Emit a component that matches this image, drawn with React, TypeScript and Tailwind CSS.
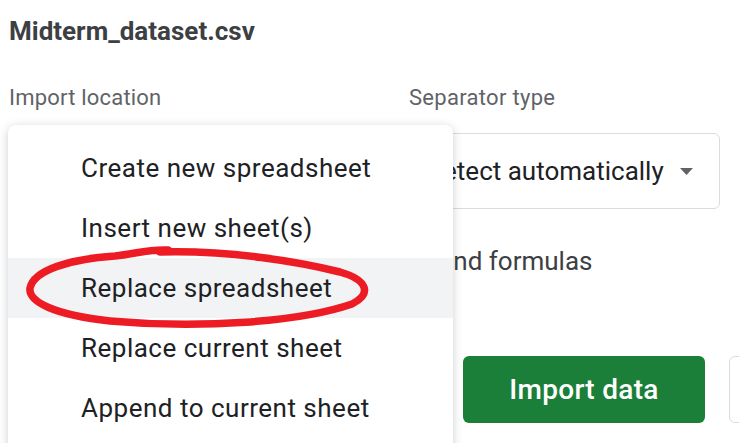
import { useState } from 'react';

type Location = 'create' | 'insert' | 'replace' | 'replaceCurrent' | 'append';

const locations: { id: Location; label: string }[] = [
  { id: 'create', label: 'Create new spreadsheet' },
  { id: 'insert', label: 'Insert new sheet(s)' },
  { id: 'replace', label: 'Replace spreadsheet' },
  { id: 'replaceCurrent', label: 'Replace current sheet' },
  { id: 'append', label: 'Append to current sheet' },
];

export default function App() {
  const [hovered, setHovered] = useState<Location>('replace'); // highlighted row in the screenshot

  return (
    <div className="relative w-[739px] h-[443px] overflow-hidden bg-white font-['Roboto',sans-serif]">
      {/* dialog body, partly under the open menu */}
      <div className="flex flex-col pl-[9px] pt-[15px]">
        <h1 className="text-[26px] leading-8 font-bold text-[#3c4043]">Midterm_dataset.csv</h1>

        <div className="mt-[37px] grid grid-cols-[400px_311px]">
          <div className="flex flex-col">
            <span className="text-[22px] leading-7 tracking-[0.2px] text-[#5f6368]">Import location</span>
          </div>
          <div className="flex flex-col">
            <span className="text-[22px] leading-7 tracking-[0.3px] text-[#5f6368]">Separator type</span>
            <div className="mt-[21px] h-[76px] flex items-center justify-between pl-4 pr-[26px] border border-[#dadce0] rounded-md">
              <span className="text-[26px] text-[#202124]">Detect automatically</span>
              <svg width="13" height="7" viewBox="0 0 13 7">
                <path d="M0 0 L13 0 L6.5 7 Z" fill="#5f6368" />
              </svg>
            </div>
          </div>
        </div>

        <label className="mt-[32px] h-10 flex items-center gap-6 text-[26px] text-[#3c4043]">
          <span className="w-10 h-10 flex items-center justify-center">
            <span className="w-[18px] h-[18px] border-2 border-[#5f6368] rounded-sm" />
          </span>
          Convert text to numbers, dates, and formulas
        </label>

        <div className="mt-[75px] flex gap-6 pl-[454px]">
          <button className="shrink-0 w-[242px] h-[67px] rounded-md bg-[#1b7f3a] text-white text-[28px] font-medium tracking-[0.3px]">
            Import data
          </button>
          <button className="shrink-0 h-[67px] px-10 rounded-md border border-[#dadce0] bg-white text-[#1a73e8] text-[28px] font-medium">
            Cancel
          </button>
        </div>
      </div>

      {/* open dropdown menu */}
      <div className="absolute left-2 top-[125px] w-[445px] h-[360px] bg-white rounded-lg shadow-[0_2px_10px_rgba(60,64,67,0.25)] pt-[13px]">
        {locations.map((loc) => (
          <div
            key={loc.id}
            onMouseEnter={() => setHovered(loc.id)}
            className={`h-[60px] flex items-center pl-[73px] text-[26px] tracking-[0.5px] text-[#202124] ${
              hovered === loc.id ? 'bg-[#f1f3f4]' : ''
            }`}
          >
            {loc.label}
          </div>
        ))}
      </div>

      {/* red hand-drawn annotation */}
      <svg className="absolute inset-0 pointer-events-none" width="739" height="443" viewBox="0 0 739 443">
        <path
          d="M160 252 C230 250 300 262 340 272 C368 280 372 294 352 304 C300 322 200 329 110 321 C55 315 28 302 30 288 C34 270 70 259 115 256 C135 254 148 249 168 250"
          fill="none"
          stroke="#ed1c24"
          strokeWidth="7.5"
          strokeLinecap="round"
          strokeLinejoin="round"
        />
      </svg>
    </div>
  );
}
